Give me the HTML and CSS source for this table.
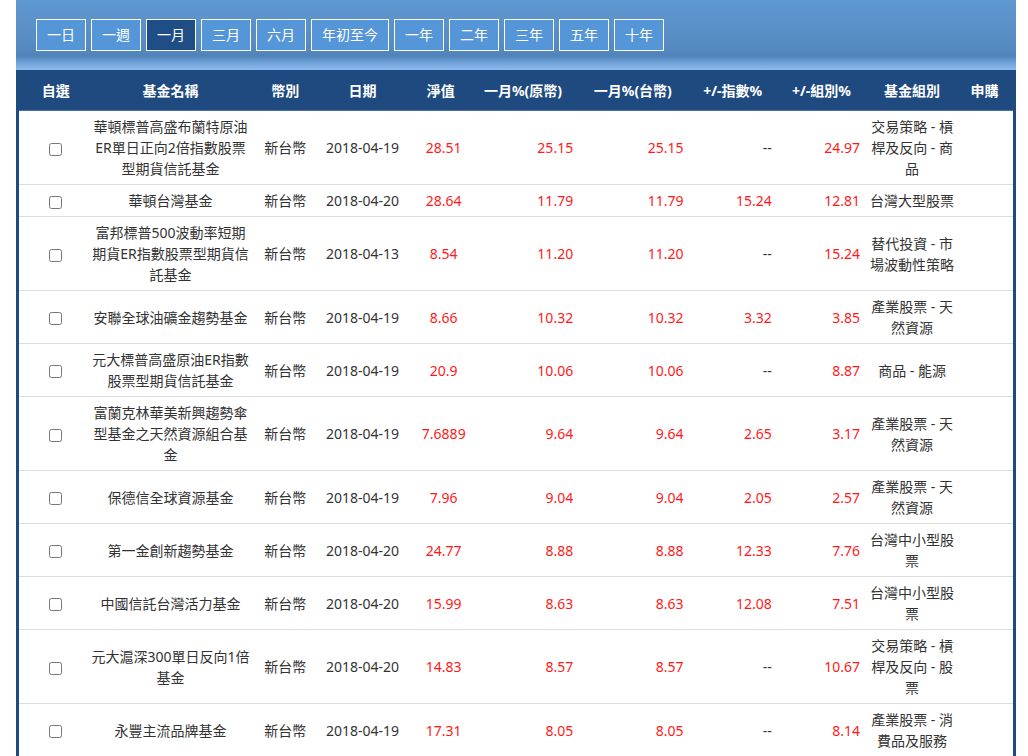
FILE: index.html
```html
<!DOCTYPE html>
<html lang="zh-Hant">
<head>
<meta charset="utf-8">
<title>基金績效排行</title>
<link rel="stylesheet" href="styles.css">
</head>
<body>
<div class="panel">
  <div class="toolbar">
    <button class="range">一日</button>
    <button class="range">一週</button>
    <button class="range active">一月</button>
    <button class="range">三月</button>
    <button class="range">六月</button>
    <button class="range">年初至今</button>
    <button class="range">一年</button>
    <button class="range">二年</button>
    <button class="range">三年</button>
    <button class="range">五年</button>
    <button class="range">十年</button>
  </div>
  <table class="funds">
    <colgroup>
      <col class="w-sel"><col class="w-name"><col class="w-cur"><col class="w-date"><col class="w-nav">
      <col class="w-r1"><col class="w-r2"><col class="w-idx"><col class="w-grp"><col class="w-cat"><col class="w-buy">
    </colgroup>
    <thead>
      <tr>
        <th class="h-sel">自選</th>
        <th>基金名稱</th>
        <th>幣別</th>
        <th>日期</th>
        <th>淨值</th>
        <th class="h-r1">一月%(原幣)</th>
        <th class="h-r2">一月%(台幣)</th>
        <th class="h-idx">+/-指數%</th>
        <th class="h-grp">+/-組別%</th>
        <th>基金組別</th>
        <th>申購</th>
      </tr>
    </thead>
    <tbody>
      <tr><td class="sel"><input type="checkbox"></td><td class="name">華頓標普高盛布蘭特原油ER單日正向2倍指數股票型期貨信託基金</td><td>新台幣</td><td>2018-04-19</td><td class="nav up">28.51</td><td class="r1 up">25.15</td><td class="r2 up">25.15</td><td class="idx">--</td><td class="grp up">24.97</td><td class="cat">交易策略 - 槓桿及反向 - 商品</td><td></td></tr>
      <tr><td class="sel"><input type="checkbox"></td><td class="name">華頓台灣基金</td><td>新台幣</td><td>2018-04-20</td><td class="nav up">28.64</td><td class="r1 up">11.79</td><td class="r2 up">11.79</td><td class="idx up">15.24</td><td class="grp up">12.81</td><td class="cat">台灣大型股票</td><td></td></tr>
      <tr><td class="sel"><input type="checkbox"></td><td class="name">富邦標普500波動率短期期貨ER指數股票型期貨信託基金</td><td>新台幣</td><td>2018-04-13</td><td class="nav up">8.54</td><td class="r1 up">11.20</td><td class="r2 up">11.20</td><td class="idx">--</td><td class="grp up">15.24</td><td class="cat">替代投資 - 市場波動性策略</td><td></td></tr>
      <tr><td class="sel"><input type="checkbox"></td><td class="name">安聯全球油礦金趨勢基金</td><td>新台幣</td><td>2018-04-19</td><td class="nav up">8.66</td><td class="r1 up">10.32</td><td class="r2 up">10.32</td><td class="idx up">3.32</td><td class="grp up">3.85</td><td class="cat">產業股票 - 天然資源</td><td></td></tr>
      <tr><td class="sel"><input type="checkbox"></td><td class="name">元大標普高盛原油ER指數股票型期貨信託基金</td><td>新台幣</td><td>2018-04-19</td><td class="nav up">20.9</td><td class="r1 up">10.06</td><td class="r2 up">10.06</td><td class="idx">--</td><td class="grp up">8.87</td><td class="cat">商品 - 能源</td><td></td></tr>
      <tr><td class="sel"><input type="checkbox"></td><td class="name">富蘭克林華美新興趨勢傘型基金之天然資源組合基金</td><td>新台幣</td><td>2018-04-19</td><td class="nav up">7.6889</td><td class="r1 up">9.64</td><td class="r2 up">9.64</td><td class="idx up">2.65</td><td class="grp up">3.17</td><td class="cat">產業股票 - 天然資源</td><td></td></tr>
      <tr><td class="sel"><input type="checkbox"></td><td class="name">保德信全球資源基金</td><td>新台幣</td><td>2018-04-19</td><td class="nav up">7.96</td><td class="r1 up">9.04</td><td class="r2 up">9.04</td><td class="idx up">2.05</td><td class="grp up">2.57</td><td class="cat">產業股票 - 天然資源</td><td></td></tr>
      <tr><td class="sel"><input type="checkbox"></td><td class="name">第一金創新趨勢基金</td><td>新台幣</td><td>2018-04-20</td><td class="nav up">24.77</td><td class="r1 up">8.88</td><td class="r2 up">8.88</td><td class="idx up">12.33</td><td class="grp up">7.76</td><td class="cat">台灣中小型股票</td><td></td></tr>
      <tr><td class="sel"><input type="checkbox"></td><td class="name">中國信託台灣活力基金</td><td>新台幣</td><td>2018-04-20</td><td class="nav up">15.99</td><td class="r1 up">8.63</td><td class="r2 up">8.63</td><td class="idx up">12.08</td><td class="grp up">7.51</td><td class="cat">台灣中小型股票</td><td></td></tr>
      <tr><td class="sel"><input type="checkbox"></td><td class="name">元大滬深300單日反向1倍基金</td><td>新台幣</td><td>2018-04-20</td><td class="nav up">14.83</td><td class="r1 up">8.57</td><td class="r2 up">8.57</td><td class="idx">--</td><td class="grp up">10.67</td><td class="cat">交易策略 - 槓桿及反向 - 股票</td><td></td></tr>
      <tr><td class="sel"><input type="checkbox"></td><td class="name">永豐主流品牌基金</td><td>新台幣</td><td>2018-04-19</td><td class="nav up">17.31</td><td class="r1 up">8.05</td><td class="r2 up">8.05</td><td class="idx">--</td><td class="grp up">8.14</td><td class="cat">產業股票 - 消費品及服務</td><td></td></tr>
    </tbody>
  </table>
</div>
</body>
</html>
```

FILE: styles.css
```css
html, body {
  margin: 0;
  padding: 0;
  background: #ffffff;
}

body {
  font-family: "Noto Sans", "Noto Sans CJK TC", sans-serif;
  font-size: 14px;
  color: #333333;
}

.panel {
  width: 1000px;
  margin-left: 16px;
}

.toolbar {
  height: 70px;
  box-sizing: border-box;
  padding: 19px 0 0 20px;
  display: flex;
  gap: 5px;
  align-items: flex-start;
  background: linear-gradient(to bottom, #5f99d1 0%, #5689bf 70%, #5083b9 80%, #6a9dd3 88%, #8cbdf0 100%);
}

.range {
  font-family: "Noto Sans", "Noto Sans CJK TC", sans-serif;
  font-size: 14px;
  line-height: 20px;
  color: #ffffff;
  background: #5596d8;
  border: 1px solid #ffffff;
  padding: 5px 10px;
  margin: 0;
  border-radius: 0;
  cursor: pointer;
}

.range.active {
  background: #1f4d85;
}

.funds {
  width: 1000px;
  border-collapse: collapse;
  table-layout: fixed;
  border-left: 3px solid #1e4a80;
  border-right: 3px solid #1e4a80;
}

.w-sel { width: 72px; }
.w-name { width: 161px; }
.w-cur { width: 68px; }
.w-date { width: 86px; }
.w-nav { width: 70px; }
.w-r1 { width: 107px; }
.w-r2 { width: 110px; }
.w-idx { width: 88px; }
.w-grp { width: 86px; }
.w-cat { width: 88px; }
.w-buy { width: 58px; }

.funds th {
  background: #1e4a80;
  color: #ffffff;
  font-weight: 700;
  font-size: 14px;
  line-height: 21px;
  padding: 10px 0 9px;
  text-align: center;
  white-space: nowrap;
  border-bottom: 1px solid #4a72a3;
}

.funds th.h-sel { padding-left: 3px; }
.funds th.h-r1 { padding-right: 13px; }
.funds th.h-r2 { padding-right: 11px; }
.funds th.h-idx { padding-right: 10px; }
.funds th.h-grp { padding-right: 7px; }

.funds td {
  font-size: 14px;
  line-height: 21px;
  padding: 5px 0;
  text-align: center;
  vertical-align: middle;
  border-bottom: 1px solid #dddddd;
  color: #333333;
}

.funds td.sel { padding-left: 2px; }

.funds td.sel input {
  margin: 0;
  width: 13px;
  height: 13px;
  vertical-align: middle;
}

.funds td.nav { padding-left: 6px; }
.funds td.r1 { text-align: right; padding-right: 10px; }
.funds td.r2 { text-align: right; padding-right: 10px; }
.funds td.idx { text-align: right; padding-right: 10px; }
.funds td.grp { text-align: right; padding-right: 8px; }

.funds td.up { color: #ff1a1a; }
```
